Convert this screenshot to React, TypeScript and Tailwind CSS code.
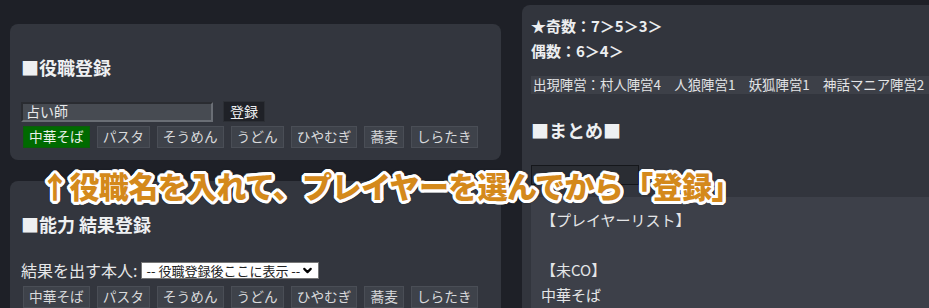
import { ChevronDown } from 'lucide-react';

const players = ['中華そば', 'パスタ', 'そうめん', 'うどん', 'ひやむぎ', '蕎麦', 'しらたき'];
const font = "font-['Noto_Sans_CJK_JP','Noto_Sans',sans-serif]";

function PlayerChips({ active }: { active?: string }) {
  return (
    <div className="flex gap-[7px] pl-[2px]">
      {players.map((p) => (
        <div
          key={p}
          className={
            'flex h-[22px] items-center border px-[5px] text-[13.7px] leading-none ' +
            (p === active
              ? 'border-[#0b5d0b] bg-[#006a00] text-[#e8f0e8]'
              : 'border-[#4a4e56] bg-[#3e424a] text-[#d9dadc]')
          }
        >
          {p}
        </div>
      ))}
    </div>
  );
}

export default function App() {
  return (
    <div className={`relative flex h-[308px] w-[929px] overflow-hidden bg-[#1e2027] ${font}`}>
      {/* left column */}
      <div className="flex w-[522px] shrink-0 flex-col gap-[21px] pl-[10px] pr-[21px] pt-[24px]">
        <section className="h-[137px] rounded-lg bg-[#33363e] px-[11px] pt-[31px]">
          <h2 className="text-[18px] font-bold leading-[24px] text-[#eef0f2]">■役職登録</h2>
          <div className="mt-[22px] flex items-center gap-[10px]">
            <div className="flex h-[20px] w-[192px] items-center border-2 border-t-[#2a2c31] border-l-[#2a2c31] border-r-[#6a6e75] border-b-[#6a6e75] bg-[#474b52] px-[3px] text-[14px] text-[#e8e9eb]">
              占い師
            </div>
            <div className="flex h-[21px] items-center border border-[#2c2f35] bg-[#1f2127] px-[6px] text-[14px] text-[#eceef0]">
              登録
            </div>
          </div>
          <div className="mt-[4px]">
            <PlayerChips active="中華そば" />
          </div>
        </section>

        <section className="flex-1 rounded-t-lg bg-[#33363e] px-[11px] pt-[31px]">
          <h2 className="text-[18px] font-bold leading-[24px] text-[#eef0f2]">■能力 結果登録</h2>
          <div className="mt-[23px] flex items-center gap-[4px]">
            <span className="text-[16px] leading-[22px] text-[#e6e7e9]">結果を出す本人:</span>
            <div className="flex h-[17px] w-[178px] items-center justify-between border border-[#777] bg-white px-[4px] text-[13px] leading-none text-[#222]">
              <span>-- 役職登録後ここに表示 --</span>
              <ChevronDown size={13} strokeWidth={4} className="text-black" />
            </div>
          </div>
          <div className="mt-[5px]">
            <PlayerChips />
          </div>
        </section>
      </div>

      {/* right column */}
      <div className="flex-1 pt-[5px]">
        <section className="h-full rounded-tl-lg bg-[#32353d] pl-[9px] pt-[8px]">
          <p className="text-[15px] font-bold leading-[25px] text-[#eceef0]">★奇数：7＞5＞3＞</p>
          <p className="text-[15px] font-bold leading-[25px] text-[#eceef0]">偶数：6＞4＞</p>
          <div className="mt-[13px] flex h-[18px] items-center whitespace-nowrap bg-[#3d4048] pl-[2px] text-[13.4px] leading-none text-[#e2e3e5]">
            出現陣営：村人陣営4　人狼陣営1　妖狐陣営1　神話マニア陣営2
          </div>
          <h2 className="mt-[24px] text-[18px] font-bold leading-[24px] text-[#eef0f2]">■まとめ■</h2>
          <div className="mt-[23px] h-[20px] w-[108px] border border-[#15171b] bg-[#2a2d33]" />
          <div className="mt-[12px] h-[120px] bg-[#3d4049] px-[10px] pt-[10px] text-[15px] leading-[25px] text-[#e4e5e7]">
            <p>【プレイヤーリスト】</p>
            <p>&nbsp;</p>
            <p>【未CO】</p>
            <p>中華そば</p>
          </div>
        </section>
      </div>

      {/* caption overlay */}
      <div className="pointer-events-none absolute left-[40px] top-[164px] whitespace-nowrap text-[30px] font-black leading-[42px] tracking-[-0.6px] text-[#d4891b] [text-shadow:3px_0_0_#fff,-3px_0_0_#fff,0_3px_0_#fff,0_-3px_0_#fff,2px_2px_0_#fff,-2px_2px_0_#fff,2px_-2px_0_#fff,-2px_-2px_0_#fff,3px_1px_0_#fff,-3px_1px_0_#fff,3px_-1px_0_#fff,-3px_-1px_0_#fff,1px_3px_0_#fff,-1px_3px_0_#fff,1px_-3px_0_#fff,-1px_-3px_0_#fff,0_0_2px_#000,0_0_4px_#000]">
        ↑役職名を入れて、プレイヤーを選んでから「登録」
      </div>
    </div>
  );
}
